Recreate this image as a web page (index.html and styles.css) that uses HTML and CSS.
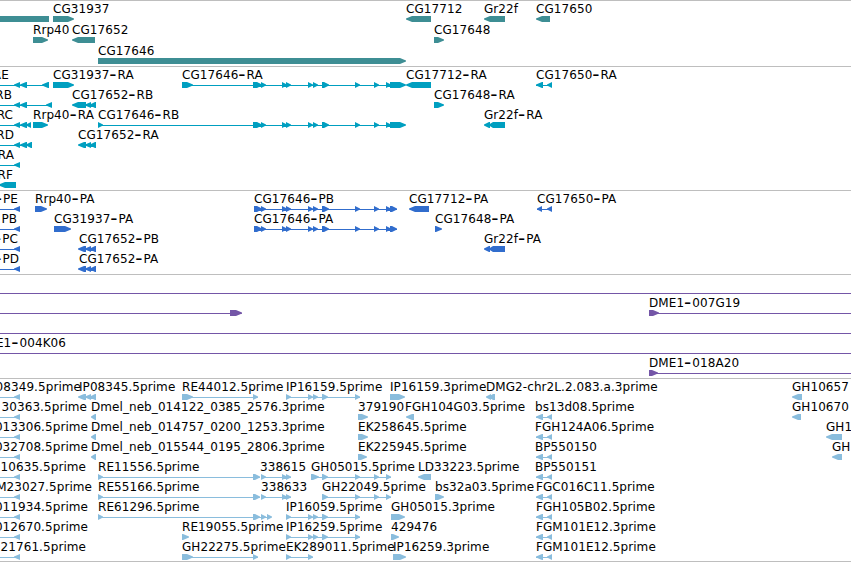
FILE: index.html
```html
<!DOCTYPE html>
<html lang="en">
  <head>
    <meta charset="utf-8" />
    <title>Genome tracks</title>
    <link rel="stylesheet" href="styles.css" />
  </head>

  <body>
    <!-- features used in more than one row, text baseline is y=0 -->
    <svg class="shared" width="0" height="0">
      <defs>
        <path id="left-end" d="M0 6H20v1H0zM20 9l-6-2.5v-1l6-2.5z" />
        <path id="left-exons" d="M0 6H27v1H0zM20 9l-6-2.5v-1l6-2.5zM27 9h-1l-6-2.5v-1l6-2.5h1z" />
        <path id="exons-17646" d="M253 6H390v1H253zM253 3h4l5 2.5v1l-5 2.5h-4zM261 3l5 2.5v1l-5 2.5zM282 3l5 2.5v1l-5 2.5zM286 3l5 2.5v1l-5 2.5zM308 3l5 2.5v1l-5 2.5zM313 3l5 2.5v1l-5 2.5zM322 3h2l5 2.5v1l-5 2.5h-2zM355 3l5 2.5v1l-5 2.5zM374 3l5 2.5v1l-5 2.5zM386 3l5 2.5v1l-5 2.5zM390 3h10l6 2.5v1l-6 2.5h-10z" />
        <path id="cds-17646" d="M254 6H397v1H254zM254 3h3l5 2.5v1l-5 2.5h-3zM261 3l5 2.5v1l-5 2.5zM282 3l5 2.5v1l-5 2.5zM286 3l5 2.5v1l-5 2.5zM308 3l5 2.5v1l-5 2.5zM313 3l5 2.5v1l-5 2.5zM322 3h2l5 2.5v1l-5 2.5h-2zM355 3l5 2.5v1l-5 2.5zM374 3l5 2.5v1l-5 2.5zM386 3l5 2.5v1l-5 2.5zM390 3h2l5 2.5v1l-5 2.5h-2z" />
        <path id="exons-17652" d="M86 9h-2l-6-2.5v-1l6-2.5h2zM91 9l-6-2.5v-1l6-2.5zM96 9h-1l-5-2.5v-1l5-2.5h1z" />
        <path id="exons-17650" d="M536 6H552v1H536zM543 9h-1l-6-2.5v-1l6-2.5h1zM552 9l-5-2.5v-1l5-2.5z" />
        <path id="exons-gr22f" d="M490 9h-1l-5-2.5v-1l5-2.5h1zM505 9h-12l-4-2.5v-1l4-2.5h12z" />
        <path id="est-182" d="M182 6H258v1H182zM182 3h5l6 2.5v1l-6 2.5h-5zM253 3l5 2.5v1l-5 2.5z" />
        <path id="est-286" d="M286 6H360v1H286zM286 3l5 2.5v1l-5 2.5zM308 3l5 2.5v1l-5 2.5zM313 3l5 2.5v1l-5 2.5zM322 3h1l5 2.5v1l-5 2.5h-1zM355 3l5 2.5v1l-5 2.5z" />
        <path id="est-98" d="M98 6H260v1H98zM98 3l5 2.5v1l-5 2.5zM253 3h2l5 2.5v1l-5 2.5h-2z" />
        <path id="est-260" d="M261 6H291v1H261zM261 3l5 2.5v1l-5 2.5zM282 3l5 2.5v1l-5 2.5zM286 3l5 2.5v1l-5 2.5z" />
        <path id="est-322" d="M322 6H391v1H322zM322 3h1l5 2.5v1l-5 2.5h-1zM355 3l5 2.5v1l-5 2.5zM374 3l5 2.5v1l-5 2.5zM386 3l5 2.5v1l-5 2.5z" />
        <path id="est-91" d="M96 9h-1l-4-2.5v-1l4-2.5h1z" />
      </defs>
    </svg>

    <div class="tracks">
      <div class="track genes">
        <svg width="851" height="65">
          <g transform="translate(0,12)">
            <path d="M0 3H49V9H0z" />
            <text x="53">CG31937</text>
            <path d="M53 3h15l6 2.5v1l-6 2.5H53z" />
            <text x="406">CG17712</text>
            <path d="M431 3h-19l-6 2.5v1l6 2.5h19z" />
            <text x="484">Gr22f</text>
            <path d="M505 3h-15l-6 2.5v1l6 2.5h15z" />
            <text x="536">CG17650</text>
            <path d="M550 3h-8l-6 2.5v1l6 2.5h8z" />
          </g>
          <g transform="translate(0,33)">
            <text x="33">Rrp40</text>
            <path d="M33 3h9l6 2.5v1l-6 2.5h-9z" />
            <text x="72">CG17652</text>
            <path d="M95 3H78l-6 2.5v1l6 2.5h17z" />
            <text x="434">CG17648</text>
            <path d="M434 3h4l6 2.5v1l-6 2.5h-4z" />
          </g>
          <g transform="translate(0,54)">
            <text x="98">CG17646</text>
            <path d="M98 3H400l6 2.5v1l-6 2.5H98z" />
          </g>
        </svg>
      </div>

      <div class="track transcripts">
        <svg width="851" height="123">
          <g transform="translate(0,12)">
            <text class="cut" x="9">RE</text>
            <use href="#left-exons" />
            <path d="M20 6H49v1H20zM49 9h-1l-6-2.5v-1l6-2.5h1z" />
            <text x="53">CG31937<tspan class="dash">-</tspan>RA</text>
            <path d="M53 3h15l6 2.5v1l-6 2.5H53z" />
            <text x="182">CG17646<tspan class="dash">-</tspan>RA</text>
            <path d="M182 6H254v1H182zM182 3h5l6 2.5v1l-6 2.5h-5z" />
            <use href="#exons-17646" />
            <text x="406">CG17712<tspan class="dash">-</tspan>RA</text>
            <path d="M431 3h-19l-6 2.5v1l6 2.5h19z" />
            <text x="536">CG17650<tspan class="dash">-</tspan>RA</text>
            <use href="#exons-17650" />
          </g>
          <g transform="translate(0,32)">
            <text class="cut" x="12">RB</text>
            <use href="#left-exons" />
            <path d="M20 6H52v1H20zM52 9l-6-2.5v-1l6-2.5z" />
            <text x="72">CG17652<tspan class="dash">-</tspan>RB</text>
            <path d="M86 9h-8l-6-2.5v-1l6-2.5h8z" />
            <use href="#exons-17652" />
            <text x="434">CG17648<tspan class="dash">-</tspan>RA</text>
            <path d="M434 3h4l6 2.5v1l-6 2.5h-4z" />
          </g>
          <g transform="translate(0,52)">
            <text class="cut" x="13">RC</text>
            <use href="#left-exons" />
            <path d="M31 3l-5 2.5v1l5 2.5z" />
            <text x="33">Rrp40<tspan class="dash">-</tspan>RA</text>
            <path d="M33 3h9l6 2.5v1l-6 2.5h-9z" />
            <text x="98">CG17646<tspan class="dash">-</tspan>RB</text>
            <path d="M98 6H254v1H98zM98 3l5 2.5v1l-5 2.5z" />
            <use href="#exons-17646" />
            <text x="484">Gr22f<tspan class="dash">-</tspan>RA</text>
            <use href="#exons-gr22f" />
          </g>
          <g transform="translate(0,72)">
            <text class="cut" x="14">RD</text>
            <use href="#left-exons" />
            <path d="M32 3h-1l-5 2.5v1l5 2.5h1z" />
            <text x="78">CG17652<tspan class="dash">-</tspan>RA</text>
            <use href="#exons-17652" />
          </g>
          <g transform="translate(0,92)">
            <text class="cut" x="14">RA</text>
            <use href="#left-end" />
          </g>
          <g transform="translate(0,112)">
            <text class="cut" x="13">RF</text>
            <path d="M16 3H5l-6 2.5v1l6 2.5h11z" />
          </g>
        </svg>
      </div>

      <div class="track proteins">
        <svg width="851" height="83">
          <g transform="translate(0,12)">
            <text class="cut" x="18"><tspan class="dash">-</tspan>PE</text>
            <use href="#left-end" />
            <text x="35">Rrp40<tspan class="dash">-</tspan>PA</text>
            <path d="M35 3h6l6 2.5v1l-6 2.5h-6z" />
            <text x="254">CG17646<tspan class="dash">-</tspan>PB</text>
            <use href="#cds-17646" />
            <text x="409">CG17712<tspan class="dash">-</tspan>PA</text>
            <path d="M429 3h-14l-6 2.5v1l6 2.5h14z" />
            <text x="537">CG17650<tspan class="dash">-</tspan>PA</text>
            <path d="M537 6H552v1H537zM542 9l-5-2.5v-1l5-2.5zM552 9l-5-2.5v-1l5-2.5z" />
          </g>
          <g transform="translate(0,32)">
            <text class="cut" x="17"><tspan class="dash">-</tspan>PB</text>
            <use href="#left-end" />
            <text x="54">CG31937<tspan class="dash">-</tspan>PA</text>
            <path d="M54 3h11l6 2.5v1l-6 2.5H54z" />
            <text x="254">CG17646<tspan class="dash">-</tspan>PA</text>
            <use href="#cds-17646" />
            <text x="435">CG17648<tspan class="dash">-</tspan>PA</text>
            <path d="M435 3h1l6 2.5v1l-6 2.5h-1z" />
          </g>
          <g transform="translate(0,52)">
            <text class="cut" x="18"><tspan class="dash">-</tspan>PC</text>
            <use href="#left-end" />
            <text x="79">CG17652<tspan class="dash">-</tspan>PB</text>
            <use href="#exons-17652" />
            <text x="484">Gr22f<tspan class="dash">-</tspan>PA</text>
            <use href="#exons-gr22f" />
          </g>
          <g transform="translate(0,72)">
            <text class="cut" x="19"><tspan class="dash">-</tspan>PD</text>
            <use href="#left-end" />
            <text x="79">CG17652<tspan class="dash">-</tspan>PA</text>
            <use href="#exons-17652" />
          </g>
        </svg>
      </div>

      <div class="track clones">
        <svg width="851" height="103">
          <g transform="translate(0,12)">
            <path d="M0 6H851v1H0z" />
          </g>
          <g transform="translate(0,32)">
            <path d="M0 6H242v1H0zM230 3h6l6 2.5v1l-6 2.5h-6z" />
            <text x="649">DME1<tspan class="dash">-</tspan>007G19</text>
            <path d="M649 6H851v1H649zM649 3h4l6 2.5v1l-6 2.5h-4z" />
          </g>
          <g transform="translate(0,52)">
            <path d="M0 6H851v1H0z" />
          </g>
          <g transform="translate(0,72)">
            <text class="cut" x="66">E1<tspan class="dash">-</tspan>004K06</text>
            <path d="M0 6H851v1H0z" />
          </g>
          <g transform="translate(0,92)">
            <text x="649">DME1<tspan class="dash">-</tspan>018A20</text>
            <path d="M649 6H851v1H649zM649 3h3l6 2.5v1l-6 2.5h-3z" />
          </g>
        </svg>
      </div>

      <div class="track ests">
        <svg width="851" height="182">
          <g transform="translate(0,12)">
            <text class="cut" x="81">08349.5prime</text>
            <use href="#left-end" />
            <text x="79">IP08345.5prime</text>
            <use href="#exons-17652" />
            <text x="182">RE44012.5prime</text>
            <use href="#est-182" />
            <text x="286">IP16159.5prime</text>
            <use href="#est-286" />
            <text x="390">IP16159.3prime</text>
            <path d="M390 3h9l6 2.5v1l-6 2.5h-9z" />
            <text x="486">DMG2-chr2L.2.083.a.3prime</text>
            <path d="M491 3l-5 2.5v1l5 2.5zM495 3h-2l-4 2.5v1l4 2.5h2z" />
            <text x="792">GH10657</text>
            <path d="M802 3h-4l-6 2.5v1l6 2.5h4z" />
          </g>
          <g transform="translate(0,32)">
            <text class="cut" x="87">30363.5prime</text>
            <use href="#left-end" />
            <text x="91">Dmel_neb_014122_0385_2576.3prime</text>
            <use href="#est-91" />
            <text x="358">379190</text>
            <path d="M358 3h4l6 2.5v1l-6 2.5h-4z" />
            <text x="405">FGH104G03.5prime</text>
            <path d="M414 3h-2l-6 2.5v1l6 2.5h2z" />
            <text x="535">bs13d08.5prime</text>
            <use href="#exons-17650" />
            <text x="792">GH10670</text>
            <path d="M801 3h-3l-6 2.5v1l6 2.5h3z" />
          </g>
          <g transform="translate(0,52)">
            <text class="cut" x="88">013306.5prime</text>
            <use href="#left-end" />
            <text x="91">Dmel_neb_014757_0200_1253.3prime</text>
            <use href="#est-91" />
            <text x="358">EK258645.5prime</text>
            <path d="M358 3h4l6 2.5v1l-6 2.5h-4z" />
            <text x="535">FGH124A06.5prime</text>
            <use href="#exons-17650" />
            <text x="826">GH1</text>
            <path d="M842 3h-10l-6 2.5v1l6 2.5h10z" />
          </g>
          <g transform="translate(0,72)">
            <text class="cut" x="88">032708.5prime</text>
            <use href="#left-end" />
            <text x="91">Dmel_neb_015544_0195_2806.3prime</text>
            <use href="#est-91" />
            <text x="358">EK225945.5prime</text>
            <path d="M358 3h3l6 2.5v1l-6 2.5h-3z" />
            <text x="535">BP550150</text>
            <use href="#exons-17650" />
            <text x="832">GH</text>
            <path d="M842 3h-4l-6 2.5v1l6 2.5h4z" />
          </g>
          <g transform="translate(0,92)">
            <text class="cut" x="86">10635.5prime</text>
            <use href="#left-end" />
            <text x="98">RE11556.5prime</text>
            <use href="#est-98" />
            <text x="260">338615</text>
            <use href="#est-260" />
            <text x="311">GH05015.5prime</text>
            <path d="M311 6H322v1H311zM311 3h2l6 2.5v1l-6 2.5h-2z" />
            <use href="#est-322" />
            <text x="418">LD33223.5prime</text>
            <path d="M431 3h-7l-6 2.5v1l6 2.5h7z" />
            <text x="535">BP550151</text>
            <use href="#exons-17650" />
          </g>
          <g transform="translate(0,112)">
            <text class="cut" x="92">M23027.5prime</text>
            <use href="#left-end" />
            <text x="98">RE55166.5prime</text>
            <use href="#est-98" />
            <text x="261">338633</text>
            <use href="#est-260" />
            <text x="322">GH22049.5prime</text>
            <use href="#est-322" />
            <text x="435">bs32a03.5prime</text>
            <path d="M435 3h3l6 2.5v1l-6 2.5h-3z" />
            <text x="536">FGC016C11.5prime</text>
            <use href="#exons-17650" />
          </g>
          <g transform="translate(0,132)">
            <text class="cut" x="88">011934.5prime</text>
            <use href="#left-end" />
            <text x="98">RE61296.5prime</text>
            <use href="#est-98" />
            <path d="M258 6H270v1H258zM261 3l5 2.5v1l-5 2.5zM267 3l5 2.5v1l-5 2.5z" />
            <text x="286">IP16059.5prime</text>
            <use href="#est-286" />
            <text x="391">GH05015.3prime</text>
            <path d="M391 3h8l6 2.5v1l-6 2.5h-8z" />
            <text x="536">FGH105B02.5prime</text>
            <use href="#exons-17650" />
          </g>
          <g transform="translate(0,152)">
            <text class="cut" x="88">012670.5prime</text>
            <use href="#left-end" />
            <text x="182">RE19055.5prime</text>
            <path d="M182 3h1l6 2.5v1l-6 2.5h-1z" />
            <text x="286">IP16259.5prime</text>
            <use href="#est-286" />
            <text x="391">429476</text>
            <path d="M391 3h2l6 2.5v1l-6 2.5h-2z" />
            <text x="536">FGM101E12.3prime</text>
            <use href="#exons-17650" />
          </g>
          <g transform="translate(0,172)">
            <text class="cut" x="86">21761.5prime</text>
            <use href="#left-end" />
            <text x="182">GH22275.5prime</text>
            <use href="#est-182" />
            <text x="286">EK289011.5prime</text>
            <path d="M286 6H313v1H286zM286 3l5 2.5v1l-5 2.5zM308 3l5 2.5v1l-5 2.5z" />
            <text x="393">IP16259.3prime</text>
            <path d="M393 3h7l6 2.5v1l-6 2.5h-7z" />
            <text x="536">FGM101E12.5prime</text>
            <use href="#exons-17650" />
          </g>
        </svg>
      </div>
    </div>
  </body>
</html>
```

FILE: styles.css
```css
body {
  background-color: #fff;
  margin: 0;
  padding: 0;
  overflow: hidden;
}

svg {
  display: block;
}

text {
  fill: #000;
  font-family: "DejaVu Sans", sans-serif;
  font-size: 12px;
  letter-spacing: 0.07px;
}

/* wide dash between gene name and suffix */
.dash {
  font-size: 20px;
  baseline-shift: -2px;
  letter-spacing: 1px;
}

/* labels that run off the left side */
.cut {
  text-anchor: end;
}

.tracks {
  width: 851px;
  border-bottom: 1px solid #bebebe;
}

.track {
  border-top: 1px solid #bebebe;
}

.genes {
  fill: #3e8e94;
}

.transcripts {
  fill: #009fc0;
}

.proteins {
  fill: #316dcd;
}

.clones {
  fill: #7456a7;
}

.ests {
  fill: #8abddd;
}
```
